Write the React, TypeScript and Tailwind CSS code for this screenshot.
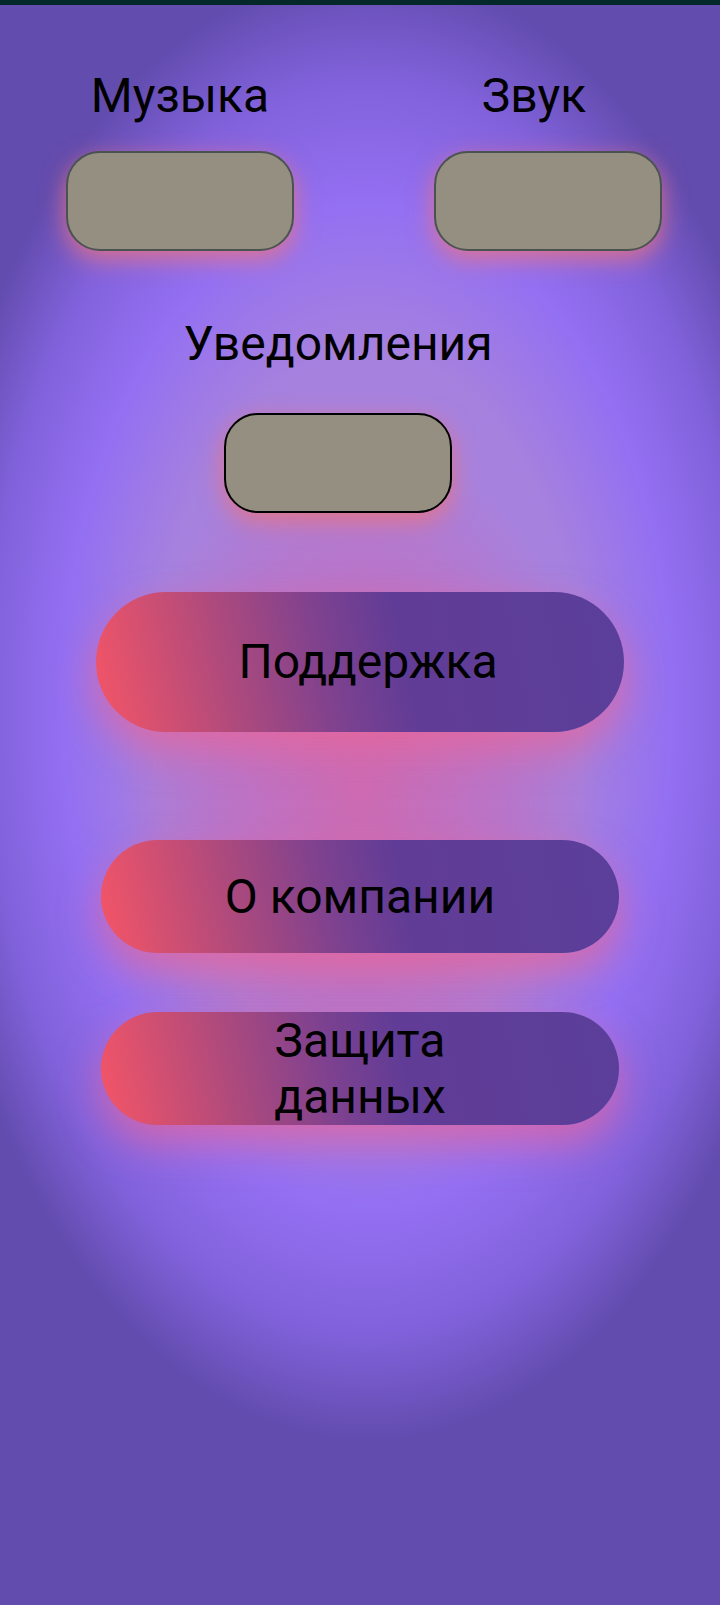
import React from 'react';

function Toggle({ dark }: { dark?: boolean }) {
  return (
    <div
      className={
        'w-[228px] h-[100px] rounded-[34px] bg-[#948f80] border-2 shadow-[0_8px_24px_rgba(240,115,120,0.8)] ' +
        (dark ? 'border-black' : 'border-[#4a5350]')
      }
    />
  );
}

function GradientButton({ label, tall, shift }: { label: React.ReactNode; tall?: boolean; shift?: boolean }) {
  return (
    <button
      className={
        'flex items-center justify-center rounded-full text-black text-[48px] leading-[56px] bg-[linear-gradient(78deg,#f55566_0%,#b04a7c_25%,#7c4190_45%,#613c96_58%,#5a3f9a_100%)] shadow-[0_18px_40px_rgba(235,100,150,0.72)] ' +
        (tall ? 'w-[528px] h-[140px]' : 'w-[518px] h-[113px]') +
        (shift ? ' pl-4' : '')
      }
    >
      {label}
    </button>
  );
}

export default function App() {
  return (
    <div
      className="w-[720px] h-[1605px] overflow-hidden bg-[#624cae] bg-[radial-gradient(ellipse_240px_350px_at_50%_49%,rgba(212,102,170,0.85)_0%,rgba(200,106,184,0.6)_55%,rgba(190,110,200,0)_100%),radial-gradient(ellipse_445px_735px_at_51%_44%,#a884dc_0%,#a681de_48%,#9470f2_68%,#8262dc_85%,#624cae_100%)]"
      style={{ fontFamily: 'Roboto, "Noto Sans", sans-serif' }}
    >
      {/* status strip */}
      <div className="h-[5px] bg-[#05282a]" />

      {/* music / sound */}
      <div className="flex pt-[63px] pl-[66px]">
        <div className="w-[228px] flex flex-col items-center">
          <span className="text-[48px] leading-[56px] whitespace-nowrap">Музыка</span>
          <div className="mt-[27px]">
            <Toggle />
          </div>
        </div>
        <div className="w-[228px] ml-[140px] flex flex-col items-center">
          <span className="text-[48px] leading-[56px] whitespace-nowrap mr-[28px]">Звук</span>
          <div className="mt-[27px]">
            <Toggle />
          </div>
        </div>
      </div>

      {/* notifications */}
      <div className="ml-[224px] w-[228px] mt-[65px] flex flex-col items-center">
        <span className="text-[48px] leading-[56px] whitespace-nowrap">Уведомления</span>
        <div className="mt-[41px]">
          <Toggle dark />
        </div>
      </div>

      {/* menu buttons */}
      <div className="flex flex-col items-center mt-[79px]">
        <GradientButton label="Поддержка" tall shift />
        <div className="mt-[108px]">
          <GradientButton label="О компании" />
        </div>
        <div className="mt-[59px]">
          <GradientButton
            label={
              <span className="block">
                Защита
                <br />
                данных
              </span>
            }
          />
        </div>
      </div>
    </div>
  );
}
